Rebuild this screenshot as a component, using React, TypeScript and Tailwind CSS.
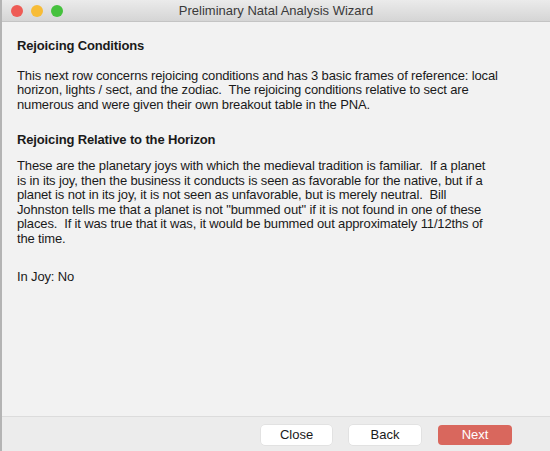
export default function App() {
  const font = { fontFamily: '"Liberation Sans", Arial, sans-serif' };
  return (
    <div
      className="flex h-[451px] w-[550px] flex-col overflow-hidden border-l-2 border-[#b4b4b4] bg-[#f2f2f2] text-[13px] text-[#1a1a1a]"
      style={font}
    >
      {/* title bar */}
      <div className="relative flex h-[22px] shrink-0 items-center justify-center border-b border-[#c4c4c4] bg-gradient-to-b from-[#ebebeb] to-[#d5d5d5]">
        <div className="absolute left-[9px] top-[5px] flex gap-[8px]">
          <span className="h-[12px] w-[12px] rounded-full bg-[#ee5b55]" />
          <span className="h-[12px] w-[12px] rounded-full bg-[#f7bc36]" />
          <span className="h-[12px] w-[12px] rounded-full bg-[#45c13d]" />
        </div>
        <span className="text-[13px] text-[#3a3a3a]">Preliminary Natal Analysis Wizard</span>
      </div>

      {/* content */}
      <div className="flex-1 whitespace-pre px-[15px] pt-[17px] leading-[14.6px] tracking-[-0.14px]">
        <h2 className="font-bold">Rejoicing Conditions</h2>
        <p className="mt-[15px]">
          This next row concerns rejoicing conditions and has 3 basic frames of reference: local{"\n"}
          horizon, lights / sect, and the zodiac.  The rejoicing conditions relative to sect are{"\n"}
          numerous and were given their own breakout table in the PNA.
        </p>
        <h2 className="mt-[21px] font-bold">Rejoicing Relative to the Horizon</h2>
        <p className="mt-[11px]">
          These are the planetary joys with which the medieval tradition is familiar.  If a planet{"\n"}
          is in its joy, then the business it conducts is seen as favorable for the native, but if a{"\n"}
          planet is not in its joy, it is not seen as unfavorable, but is merely neutral.  Bill{"\n"}
          Johnston tells me that a planet is not "bummed out" if it is not found in one of these{"\n"}
          places.  If it was true that it was, it would be bummed out approximately 11/12ths of{"\n"}
          the time.
        </p>
        <p className="mt-[23px]">In Joy: No</p>
      </div>

      {/* footer */}
      <div className="flex h-[35px] shrink-0 items-start justify-end gap-[17px] border-t border-[#dcdcdc] bg-[#ececec] pr-[38px] pt-[8px]">
        <button className="h-[20px] w-[71px] rounded-[4px] bg-white text-[13px] text-[#1a1a1a] shadow-[0_0_0_0.5px_#d8d8d8]">
          Close
        </button>
        <button className="h-[20px] w-[72px] rounded-[4px] bg-white text-[13px] text-[#1a1a1a] shadow-[0_0_0_0.5px_#d8d8d8]">
          Back
        </button>
        <button className="h-[20px] w-[74px] rounded-[4px] bg-[#d9675d] text-[13px] text-white">
          Next
        </button>
      </div>
    </div>
  );
}
